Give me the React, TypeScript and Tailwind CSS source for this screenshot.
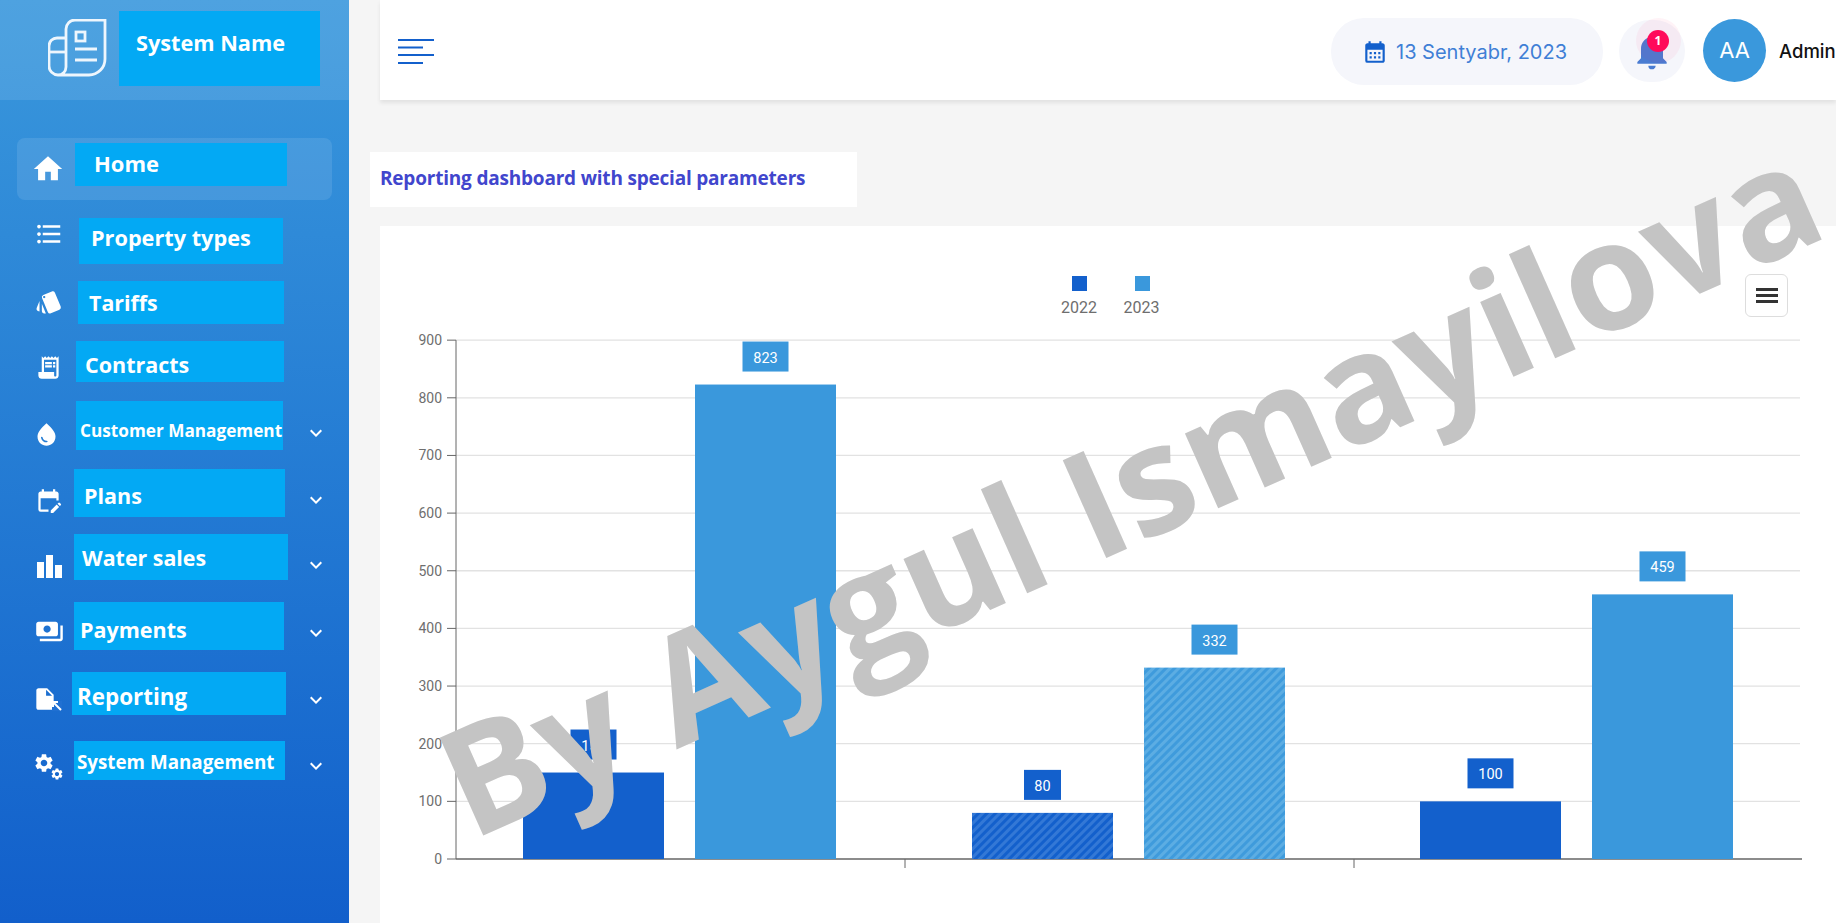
import type { ReactNode } from "react";
import {
  MdHome,
  MdStyle,
  MdReceiptLong,
  MdWaterDrop,
  MdEditCalendar,
  MdPayments,
  MdInsertDriveFile,
  MdKeyboardArrowDown,
  MdCalendarMonth,
  MdNotifications,
  MdFormatListBulleted,
  MdSettings,
} from "react-icons/md";

type NavItem = {
  label: string;
  icon: ReactNode;
  row: string;
  box: string;
  chevron?: string;
};

const navItems: NavItem[] = [
  {
    label: "Property types",
    icon: <MdFormatListBulleted className="ml-[34px] mt-[1px] h-[30px] w-[30px] text-white" />,
    row: "mt-[18px] h-[46px]",
    box: "ml-[16px] w-[204px] h-[46px] pl-[12px] pt-[4px] text-[21.7px]",
  },
  {
    label: "Tariffs",
    icon: <MdStyle className="ml-[35px] mt-[7px] h-[28px] w-[28px] text-white" />,
    row: "mt-[17px] h-[43px]",
    box: "ml-[15px] w-[206px] h-[43px] pl-[11px] pt-[6px] text-[21.4px]",
  },
  {
    label: "Contracts",
    icon: <MdReceiptLong className="ml-[35px] mt-[13px] h-[27px] w-[27px] text-white" />,
    row: "mt-[17px] h-[41px]",
    box: "ml-[13px] w-[208px] h-[41px] pl-[9px] pt-[8px] text-[21.5px]",
  },
  {
    label: "Customer Management",
    icon: <MdWaterDrop className="ml-[33px] mt-[20px] h-[27px] w-[27px] text-white" />,
    row: "mt-[19px] h-[49px]",
    box: "ml-[13px] w-[207px] h-[49px] pl-[4px] pt-[17px] text-[17.2px]",
    chevron: "mt-[20px] ml-[21px]",
  },
  {
    label: "Plans",
    icon: <MdEditCalendar className="ml-[35px] mt-[18px] h-[27px] w-[27px] text-white" />,
    row: "mt-[19px] h-[48px]",
    box: "ml-[11px] w-[211px] h-[48px] pl-[10px] pt-[11px] text-[21.5px]",
    chevron: "mt-[19px] ml-[19px]",
  },
  {
    label: "Water sales",
    icon: (
      <svg viewBox="0 0 25 23" className="ml-[37px] mt-[21px] h-[23px] w-[25px]" fill="#fff">
        <rect x="0" y="7" width="7" height="16" />
        <rect x="9" y="0" width="7" height="23" />
        <rect x="18" y="10" width="7" height="13" />
      </svg>
    ),
    row: "mt-[17px] h-[46px]",
    box: "ml-[11px] w-[214px] h-[46px] pl-[8px] pt-[8px] text-[21.4px]",
    chevron: "mt-[19px] ml-[16px]",
  },
  {
    label: "Payments",
    icon: <MdPayments className="ml-[35px] mt-[15px] h-[29px] w-[29px] text-white" />,
    row: "mt-[22px] h-[48px]",
    box: "ml-[11px] w-[210px] h-[48px] pl-[6px] pt-[12px] text-[21.5px]",
    chevron: "mt-[19px] ml-[20px]",
  },
  {
    label: "Reporting",
    icon: (
      <div className="relative ml-[37px] mt-[16px] h-[22px] w-[24px]">
        <MdInsertDriveFile className="absolute -left-[5px] -top-[2px] h-[26px] w-[26px] text-white" />
        <svg viewBox="0 0 10 10" className="absolute -right-[1px] -bottom-[1px] h-[10px] w-[10px] bg-[#2070d2]" fill="none" stroke="#fff" strokeWidth="2">
          <path d="M1 6 V1 H6 M1 1 L9 9" />
        </svg>
      </div>
    ),
    row: "mt-[22px] h-[43px]",
    box: "ml-[9px] w-[214px] h-[43px] pl-[5px] pt-[8px] text-[22.4px]",
    chevron: "mt-[16px] ml-[18px]",
  },
  {
    label: "System Management",
    icon: (
      <div className="relative ml-[35px] mt-[13px] h-[26px] w-[27px]">
        <MdSettings className="absolute -left-[2px] -top-[2px] h-[22px] w-[22px] text-white" />
        <MdSettings className="absolute -right-[2px] -bottom-[1px] h-[14px] w-[14px] text-white" />
      </div>
    ),
    row: "mt-[26px] h-[39px]",
    box: "ml-[11px] w-[211px] h-[39px] pl-[3px] pt-[7px] text-[18.8px]",
    chevron: "mt-[13px] ml-[19px]",
  },
];

function Logo() {
  return (
    <svg viewBox="0 0 60 60" className="h-[60px] w-[60px]" fill="none" stroke="#eef6fd" strokeWidth="2.8">
      <path d="M18 19 H9 a8 8 0 0 0 -8 8 V47 a9 9 0 0 0 9 9 a8 8 0 0 0 8 -8 V10 a9 9 0 0 1 9 -9 H57 V40 a16 16 0 0 1 -16 16 H10" />
      <path d="M1 33 H18" />
      <rect x="28" y="13" width="9" height="9" />
      <path d="M27 30 H49 M27 41 H49" />
    </svg>
  );
}

function Sidebar() {
  return (
    <aside className="h-[923px] w-[349px] shrink-0 bg-gradient-to-b from-[#3a98dc] to-[#125fcb]">
      <div className="flex h-[100px] items-start bg-white/10">
        <div className="ml-[48px] mt-[19px]">
          <Logo />
        </div>
        <div className="ml-[11px] mt-[11px] h-[75px] w-[201px] bg-[#03a9f4] pl-[17px] pt-[16px] text-[21.7px] font-bold text-white">
          System Name
        </div>
      </div>
      <div className="ml-[17px] mt-[38px] flex h-[62px] w-[315px] items-start rounded-[8px] bg-white/10">
        <MdHome className="ml-[14px] mt-[14px] h-[34px] w-[34px] text-white" />
        <div className="ml-[10px] mt-[5px] h-[43px] w-[212px] bg-[#03a9f4] pl-[19px] pt-[4px] text-[22px] font-bold text-white">
          Home
        </div>
      </div>
      <nav>
        {navItems.map((item) => (
          <div key={item.label} className={`flex items-start ${item.row}`}>
            <div className="w-[63px] shrink-0">{item.icon}</div>
            <div className={`shrink-0 bg-[#03a9f4] font-bold whitespace-nowrap text-white ${item.box}`}>
              {item.label}
            </div>
            {item.chevron && <MdKeyboardArrowDown className={`h-[24px] w-[24px] shrink-0 text-white ${item.chevron}`} />}
          </div>
        ))}
      </nav>
    </aside>
  );
}

function MenuIcon() {
  return (
    <svg viewBox="0 0 36 26" className="h-[26px] w-[36px]" stroke="#1360cc" strokeWidth="2">
      <path d="M0 2 H36 M0 9.5 H25 M0 17 H36 M0 25 H25" />
    </svg>
  );
}

function Topbar() {
  return (
    <header className="ml-[31px] flex h-[100px] items-start overflow-hidden bg-white pl-[18px] shadow-[0_3px_4px_rgba(0,0,0,0.08)]">
      <div className="mt-[38px]">
        <MenuIcon />
      </div>
      <div className="ml-auto mt-[18px] flex h-[67px] w-[272px] shrink-0 items-center rounded-[33px] bg-[#f5f6fb] pl-[31px]">
        <MdCalendarMonth className="h-[26px] w-[26px] text-[#1360cc]" />
        <span className="ml-[8px] font-['Inter',sans-serif] text-[20px] text-[#3f7fd6]">13 Sentyabr, 2023</span>
      </div>
      <div className="relative ml-[16px] mt-[20px] flex h-[62px] w-[66px] shrink-0 items-center justify-center rounded-full bg-[#f5f6fb]">
        <div className="absolute left-[17px] top-[-2px] h-[45px] w-[45px] rounded-full bg-[#ff0a5a]/5" />
        <MdNotifications className="h-[44px] w-[44px] text-[#4a7cd2]" />
        <span className="absolute left-[28px] top-[10px] flex h-[22px] w-[22px] items-center justify-center rounded-full bg-[#ff0a5a] text-[12px] font-bold text-white">
          1
        </span>
      </div>
      <div className="ml-[18px] mt-[19px] flex h-[63px] w-[63px] shrink-0 items-center justify-center rounded-full bg-[#3a98dc] font-['Inter',sans-serif] text-[22px] text-white">
        AA
      </div>
      <span className="ml-[13px] mt-[38px] w-[57px] shrink-0 font-['Inter',sans-serif] text-[18.5px] font-medium whitespace-nowrap text-[#111]">
        Admin
      </span>
    </header>
  );
}

const yTicks = [0, 100, 200, 300, 400, 500, 600, 700, 800, 900];

// chart geometry in page pixels, the svg origin sits at the card's top left
const originX = 76;
const zeroY = 633;
const unit = 0.5765;

const bars = [
  { x: 143, value: 150, color: "#1360cc", pattern: false, labelW: 46 },
  { x: 315, value: 823, color: "#3a98dc", pattern: false, labelW: 46 },
  { x: 592, value: 80, color: "#1360cc", pattern: true, labelW: 37 },
  { x: 764, value: 332, color: "#3a98dc", pattern: true, labelW: 46 },
  { x: 1040, value: 100, color: "#1360cc", pattern: false, labelW: 46 },
  { x: 1212, value: 459, color: "#3a98dc", pattern: false, labelW: 46 },
];

function Chart() {
  const font = "Roboto, sans-serif";
  return (
    <svg width="1456" height="697" viewBox="0 0 1456 697" className="block">
      <defs>
        <pattern id="hatchDark" width="6" height="6" patternUnits="userSpaceOnUse" patternTransform="rotate(45)">
          <rect width="6" height="6" fill="#1360cc" />
          <rect width="3" height="6" fill="#3378d6" />
        </pattern>
        <pattern id="hatchLight" width="6" height="6" patternUnits="userSpaceOnUse" patternTransform="rotate(45)">
          <rect width="6" height="6" fill="#3f9bdc" />
          <rect width="3" height="6" fill="#5cade3" />
        </pattern>
      </defs>

      <rect x="692" y="50" width="15" height="15" fill="#1360cc" />
      <text x="699" y="87" textAnchor="middle" fontSize="16" fontFamily={font} fill="#6e6e6e">
        2022
      </text>
      <rect x="755" y="50" width="15" height="15" fill="#3a98dc" />
      <text x="761.5" y="87" textAnchor="middle" fontSize="16" fontFamily={font} fill="#6e6e6e">
        2023
      </text>

      {yTicks.map((t) => {
        const y = zeroY - t * unit;
        return (
          <g key={t}>
            {t > 0 && <line x1={originX} x2={1420} y1={y} y2={y} stroke="#e2e2e2" strokeWidth="1.3" />}
            <line x1={originX - 9} x2={originX} y1={y} y2={y} stroke="#666" />
            <text x={originX - 14} y={y + 5} textAnchor="end" fontSize="14" fontFamily={font} fill="#6e6e6e">
              {t}
            </text>
          </g>
        );
      })}
      <line x1={originX} x2={originX} y1={zeroY - 900 * unit} y2={zeroY} stroke="#666" />
      <line x1={originX} x2={1422} y1={zeroY} y2={zeroY} stroke="#666" strokeWidth="1.4" />
      <line x1={525} x2={525} y1={zeroY} y2={zeroY + 9} stroke="#666" />
      <line x1={974} x2={974} y1={zeroY} y2={zeroY + 9} stroke="#666" />

      {bars.map((b) => {
        const h = b.value * unit;
        const fill = b.pattern ? (b.color === "#1360cc" ? "url(#hatchDark)" : "url(#hatchLight)") : b.color;
        const cx = b.x + 70.5;
        return (
          <g key={b.x}>
            <rect x={b.x} y={zeroY - h} width="141" height={h} fill={fill} />
            <rect x={cx - b.labelW / 2} y={zeroY - h - 43} width={b.labelW} height="30" fill={b.color} />
            <text x={cx} y={zeroY - h - 22} textAnchor="middle" fontSize="14.5" fontFamily={font} fill="#fff">
              {b.value}
            </text>
          </g>
        );
      })}
    </svg>
  );
}

export default function App() {
  return (
    <div className="relative flex h-[923px] w-[1836px] overflow-hidden bg-[#f5f5f5] font-['Open_Sans',sans-serif]">
      <Sidebar />
      <main className="min-w-0 flex-1">
        <Topbar />
        <div className="ml-[21px] mt-[52px] flex h-[55px] w-[487px] items-center bg-white pb-[3px] pl-[10px] text-[19px] font-bold tracking-[-0.2px] text-[#4146cd]">
          Reporting dashboard with special parameters
        </div>
        <section className="relative ml-[31px] mt-[19px] h-[697px] bg-white">
          <Chart />
          <button className="absolute left-[1365px] top-[48px] flex h-[43px] w-[43px] flex-col items-center justify-center gap-[3px] rounded-[6px] border border-[#ddd] bg-white">
            <span className="h-[3px] w-[22px] bg-[#333]" />
            <span className="h-[3px] w-[22px] bg-[#333]" />
            <span className="h-[3px] w-[22px] bg-[#333]" />
          </button>
        </section>
      </main>
      {/* watermark lies over everything */}
      <div className="pointer-events-none absolute left-[383px] top-[410px] origin-center -rotate-[24deg] font-['Open_Sans',sans-serif] text-[150px] leading-none font-bold whitespace-nowrap text-[#c4c4c4]">
        By Aygul Ismayilova
      </div>
    </div>
  );
}
